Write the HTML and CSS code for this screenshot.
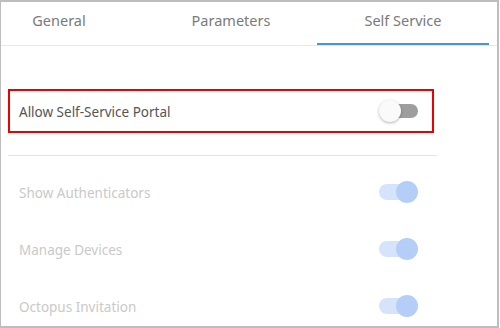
FILE: index.html
```html
<!DOCTYPE html>
<html lang="en">
<head>
  <meta charset="UTF-8">
  <title>Self Service settings</title>
  <link rel="stylesheet" href="styles.css">
</head>
<body>
  <div class="frame">
    <nav class="tabs">
      <div class="tab tab-first">General</div>
      <div class="tab tab-mid">Parameters</div>
      <div class="tab active">Self Service</div>
    </nav>

    <main class="content">
      <div class="setting highlight">
        <span class="label">Allow Self-Service Portal</span>
        <span class="toggle off"><span class="track"></span><span class="thumb"></span></span>
      </div>

      <hr class="divider">

      <div class="setting disabled">
        <span class="label">Show Authenticators</span>
        <span class="toggle on"><span class="track"></span><span class="thumb"></span></span>
      </div>
      <div class="setting disabled">
        <span class="label">Manage Devices</span>
        <span class="toggle on"><span class="track"></span><span class="thumb"></span></span>
      </div>
      <div class="setting disabled">
        <span class="label">Octopus Invitation</span>
        <span class="toggle on"><span class="track"></span><span class="thumb"></span></span>
      </div>
    </main>
  </div>
</body>
</html>
```

FILE: styles.css
```css
body {
  margin: 0;
  padding: 0;
  background: #fff;
  font-family: "Noto Sans", "Open Sans", sans-serif;
}
.frame {
  box-sizing: border-box;
  width: 499px;
  height: 328px;
  border: 2px solid #bdbdbd;
  border-left-width: 1px;
  overflow: hidden;
}
.tabs {
  display: flex;
  height: 43px;
  border-bottom: 1px solid #e8e8e8;
}
.tab {
  box-sizing: border-box;
  height: 43px;
  width: 172px;
  padding-top: 8px;
  text-align: center;
  font-size: 14.5px;
  color: #7a7a7a;
}
.tab-first {
  width: 116px;
}
.tab-mid {
  margin-left: 28px;
}
.tab.active {
  border-bottom: 2px solid #4a8ff0;
}
.content {
  padding: 43px 0 0 7px;
}
.setting {
  box-sizing: border-box;
  width: 426px;
  display: flex;
  align-items: center;
  justify-content: space-between;
  padding: 0 16px 0 11px;
  font-size: 13.5px;
}
.setting .label {
  padding-top: 2px;
}
.highlight {
  height: 44px;
  border: 2px solid #ee0000;
  padding: 0 14px 0 9px;
  color: #555;
}
.divider {
  width: 429px;
  margin: 22px 0 7px;
  border: none;
  border-top: 1px solid #d8e6f8;
}
.disabled {
  height: 57px;
  color: #c9c9c9;
}
.toggle {
  position: relative;
  width: 39px;
  height: 22px;
}
.track {
  position: absolute;
  top: 4px;
  left: 3px;
  right: 0;
  height: 14px;
  border-radius: 7px;
}
.thumb {
  position: absolute;
  top: 0;
  width: 22px;
  height: 22px;
  border-radius: 50%;
}
.off .track {
  background: #9e9e9e;
}
.off .thumb {
  left: 0;
  background: #fafafa;
  box-shadow: 0 1px 3px rgba(0, 0, 0, 0.3);
}
.on .track {
  left: 0;
  right: 4px;
  top: 3px;
  height: 16px;
  border-radius: 8px;
  background: #d5e4fb;
}
.on .thumb {
  right: 0;
  background: #b4cef8;
}
```
